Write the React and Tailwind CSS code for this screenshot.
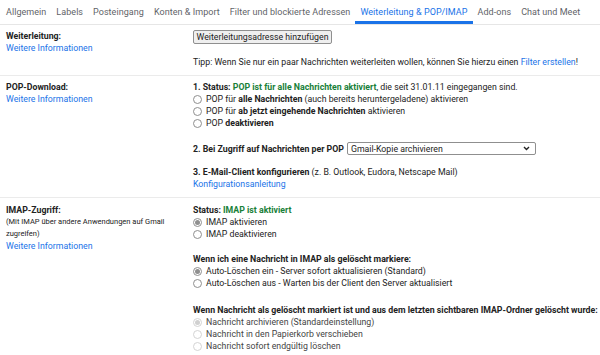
import React from "react";

function Radio({ checked, disabled, children }) {
  const ring = disabled ? "border-[#d4d4d4]" : "border-[#8f8f8f]";
  const dot = disabled ? "bg-[#d0d0d0]" : "bg-[#8f8f8f]";
  const txt = disabled ? "text-[#444]" : "text-[#222]";
  return (
    <div className={`flex items-center h-[12px] ${txt}`}>
      <span className={`w-[9px] h-[9px] rounded-full border ${ring} bg-white flex items-center justify-center mr-[4px] shrink-0`}>
        {checked && <span className={`w-[5px] h-[5px] rounded-full ${dot}`} />}
      </span>
      <span>{children}</span>
    </div>
  );
}

const tabs = [
  "Allgemein",
  "Labels",
  "Posteingang",
  "Konten & Import",
  "Filter und blockierte Adressen",
  "Weiterleitung & POP/IMAP",
  "Add-ons",
  "Chat und Meet",
];

export default function App() {
  return (
    <div className="w-[600px] h-[355px] bg-white overflow-hidden font-['Roboto',sans-serif] text-[8.75px] leading-[12px] text-[#222]">
      {/* Tabs */}
      <div className="flex h-[25px] border-b border-[#e6e6e6] pl-[1px]">
        {tabs.map((t) => {
          const active = t === "Weiterleitung & POP/IMAP";
          return (
            <div
              key={t}
              className={
                active
                  ? "px-[5px] h-[24px] flex items-center text-[9px] text-[#1a73e8] border-b-[3px] border-[#1a73e8] pt-[3px] tracking-[0.05px]"
                  : "px-[5px] h-[24px] flex items-center text-[9px] text-[#5f6368] tracking-[0.05px]"
              }
            >
              {t}
            </div>
          );
        })}
      </div>

      {/* Weiterleitung */}
      <div className="flex pt-[5px] pb-[7px] border-b border-[#ebebeb]">
        <div className="w-[187px] ml-[6px] shrink-0">
          <div className="font-bold">Weiterleitung:</div>
          <div className="text-[#1a73e8]">Weitere Informationen</div>
        </div>
        <div className="flex-1">
          <div className="h-[14px] w-[139px] border border-[#8f8f8f] rounded-[2px] bg-[#efefef] flex items-center justify-center text-[#222]">
            Weiterleitungsadresse hinzufügen
          </div>
          <div className="mt-[12px]">
            Tipp: Wenn Sie nur ein paar Nachrichten weiterleiten wollen, können Sie hierzu einen{" "}
            <span className="text-[#1a73e8]">Filter erstellen</span>!
          </div>
        </div>
      </div>

      {/* POP */}
      <div className="flex pt-[5px] pb-[7px] border-b border-[#ebebeb]">
        <div className="w-[187px] ml-[6px] shrink-0">
          <div className="font-bold">POP-Download:</div>
          <div className="text-[#1a73e8]">Weitere Informationen</div>
        </div>
        <div className="flex-1">
          <div>
            <span className="font-bold">1. Status: </span>
            <span className="font-bold text-[#188038]">POP ist für alle Nachrichten aktiviert</span>, die seit 31.01.11 eingegangen sind.
          </div>
          <Radio>
            POP für <b>alle Nachrichten</b> (auch bereits heruntergeladene) aktivieren
          </Radio>
          <Radio>
            POP für <b>ab jetzt eingehende Nachrichten</b> aktivieren
          </Radio>
          <Radio>
            POP <b>deaktivieren</b>
          </Radio>
          <div className="flex items-center mt-[13px] h-[13px]">
            <span className="font-bold">2. Bei Zugriff auf Nachrichten per POP</span>
            <div className="ml-[3px] w-[189px] h-[13px] border border-[#8f8f8f] rounded-[2px] flex items-center justify-between pl-[3px] pr-[5px]">
              <span>Gmail-Kopie archivieren</span>
              <svg width="7" height="5" viewBox="0 0 7 5">
                <path d="M1 1 L3.5 3.5 L6 1" fill="none" stroke="#222" strokeWidth="1.4" />
              </svg>
            </div>
          </div>
          <div className="mt-[11px]">
            <span className="font-bold">3. E-Mail-Client konfigurieren</span> (z. B. Outlook, Eudora, Netscape Mail)
          </div>
          <div className="text-[#1a73e8]">Konfigurationsanleitung</div>
        </div>
      </div>

      {/* IMAP */}
      <div className="flex pt-[6px]">
        <div className="w-[187px] ml-[6px] shrink-0">
          <div className="font-bold">IMAP-Zugriff:</div>
          <div className="text-[7.5px] w-[170px]">(Mit IMAP über andere Anwendungen auf Gmail zugreifen)</div>
          <div className="text-[#1a73e8]">Weitere Informationen</div>
        </div>
        <div className="flex-1">
          <div className="font-bold">
            Status: <span className="text-[#188038]">IMAP ist aktiviert</span>
          </div>
          <Radio checked>IMAP aktivieren</Radio>
          <Radio>IMAP deaktivieren</Radio>
          <div className="font-bold mt-[13px]">Wenn ich eine Nachricht in IMAP als gelöscht markiere:</div>
          <Radio checked>Auto-Löschen ein - Server sofort aktualisieren (Standard)</Radio>
          <Radio>Auto-Löschen aus - Warten bis der Client den Server aktualisiert</Radio>
          <div className="font-bold mt-[15px]">
            Wenn Nachricht als gelöscht markiert ist und aus dem letzten sichtbaren IMAP-Ordner gelöscht wurde:
          </div>
          <Radio checked disabled>Nachricht archivieren (Standardeinstellung)</Radio>
          <Radio disabled>Nachricht in den Papierkorb verschieben</Radio>
          <Radio disabled>Nachricht sofort endgültig löschen</Radio>
        </div>
      </div>
    </div>
  );
}
